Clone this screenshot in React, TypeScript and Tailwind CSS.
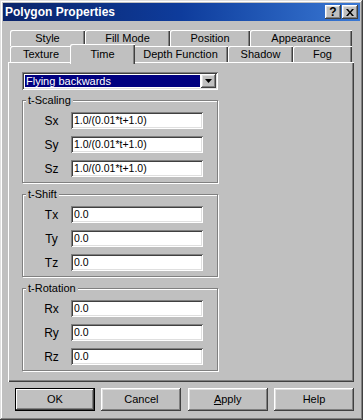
import React from "react";

const raised =
  "shadow-[inset_-1px_-1px_#404040,inset_1px_1px_#ffffff,inset_-2px_-2px_#808080,inset_2px_2px_#dfdfdf]";
const sunken =
  "shadow-[inset_1px_1px_#808080,inset_-1px_-1px_#ffffff,inset_2px_2px_#404040,inset_-2px_-2px_#dfdfdf]";

interface TabProps {
  label: string;
  width: number;
  selected?: boolean;
}

const Tab: React.FC<TabProps> = ({ label, width, selected }) => {
  if (selected) {
    return (
      <div
        className="relative z-10 -mx-[2px] -mt-[2px] h-[20px] bg-[#c0c0c0] flex justify-center pt-[2px] shadow-[inset_1px_1px_#ffffff,inset_-1px_0_#404040,inset_-2px_0_#808080] rounded-tl-[2px]"
        style={{ width: width + 4 }}
      >
        {label}
      </div>
    );
  }
  return (
    <div
      className="h-full flex items-center justify-center shadow-[inset_1px_1px_#ffffff,inset_-1px_0_#404040,inset_-2px_0_#808080] rounded-tl-[2px]"
      style={{ width }}
    >
      {label}
    </div>
  );
};

interface GroupProps {
  title: string;
  rows: { label: string; value: string }[];
  className?: string;
}

const Group: React.FC<GroupProps> = ({ title, rows, className }) => (
  <div
    className={`relative w-[196px] border border-[#808080] shadow-[inset_1px_1px_#ffffff,1px_1px_#ffffff] pt-[11px] pb-[5px] flex flex-col gap-[7px] ${className ?? ""}`}
  >
    <span className="absolute -top-[8px] left-[3px] px-[2px] bg-[#c0c0c0] leading-[14px]">
      {title}
    </span>
    {rows.map((r) => (
      <div key={r.label} className="flex items-center h-[17px]">
        <span className="w-[48px] pl-[9px] text-center text-[12px]">{r.label}</span>
        <div
          className={`w-[132px] h-[17px] bg-white ${sunken} pl-[3px] flex items-center text-[10.5px]`}
        >
          {r.value}
        </div>
      </div>
    ))}
  </div>
);

const Button: React.FC<{ children: React.ReactNode; isDefault?: boolean }> = ({
  children,
  isDefault,
}) => (
  <div
    className={`w-[80px] h-[23px] flex items-center justify-center ${
      isDefault
        ? "shadow-[inset_0_0_0_1px_#000000,inset_-2px_-2px_#404040,inset_2px_2px_#ffffff,inset_-3px_-3px_#808080]"
        : raised
    }`}
  >
    {children}
  </div>
);

export default function App() {
  const scale = "1.0/(0.01*t+1.0)";
  return (
    <div
      className="w-[363px] h-[420px] bg-[#c0c0c0] p-[3px] flex flex-col text-[11px] text-black shadow-[inset_-1px_-1px_#404040,inset_1px_1px_#dfdfdf,inset_-2px_-2px_#808080,inset_2px_2px_#ffffff]"
      style={{ fontFamily: '"Liberation Sans", Arial, sans-serif' }}
    >
      {/* Title bar */}
      <div className="h-[18px] bg-gradient-to-r from-[#0a246a] via-[#0e3c9c] to-[#3a78d4] flex items-center justify-between pl-[2px] pr-[2px]">
        <span className="text-white font-bold text-[12px]">Polygon Properties</span>
        <div className="flex gap-[1px]">
          <div className={`w-[16px] h-[14px] bg-[#c0c0c0] ${raised} flex items-center justify-center font-bold text-[12px] leading-none`}>
            ?
          </div>
          <div className={`w-[16px] h-[14px] bg-[#c0c0c0] ${raised} flex items-center justify-center`}>
            <svg width="8" height="7" viewBox="0 0 8 7">
              <path d="M0 0h2l2 2.5L6 0h2L5 3.5 8 7H6L4 4.5 2 7H0l3-3.5z" fill="#000" />
            </svg>
          </div>
        </div>
      </div>

      {/* Tabs */}
      <div className="mt-[9px] ml-[7px] w-[342px] h-[16px] flex">
        <Tab label="Style" width={75} />
        <Tab label="Fill Mode" width={85} />
        <Tab label="Position" width={80} />
        <Tab label="Appearance" width={102} />
      </div>
      <div className="ml-[7px] w-[342px] h-[16px] flex items-start">
        <Tab label="Texture" width={62} />
        <Tab label="Time" width={61} selected />
        <Tab label="Depth Function" width={95} />
        <Tab label="Shadow" width={65} />
        <Tab label="Fog" width={59} />
      </div>

      {/* Panel */}
      <div className="ml-[5px] w-[346px] h-[320px] shadow-[inset_1px_1px_#ffffff,inset_-1px_-1px_#404040,inset_-2px_-2px_#808080] pl-[14px] pt-[10px] flex flex-col">
        <div className={`w-[196px] h-[18px] bg-white ${sunken} flex items-center pl-[3px] pr-[2px] gap-[1px]`}>
          <div className="flex-1 h-[12px] bg-[#000080] text-white flex items-center pl-[1px]">
            Flying backwards
          </div>
          <div className={`w-[15px] h-[14px] bg-[#c0c0c0] ${raised} flex items-center justify-center`}>
            <svg width="7" height="4" viewBox="0 0 7 4">
              <path d="M0 0h7L3.5 4z" fill="#000" />
            </svg>
          </div>
        </div>

        <Group
          title="t-Scaling"
          className="mt-[10px]"
          rows={[
            { label: "Sx", value: scale },
            { label: "Sy", value: scale },
            { label: "Sz", value: scale },
          ]}
        />
        <Group
          title="t-Shift"
          className="mt-[11px]"
          rows={[
            { label: "Tx", value: "0.0" },
            { label: "Ty", value: "0.0" },
            { label: "Tz", value: "0.0" },
          ]}
        />
        <Group
          title="t-Rotation"
          className="mt-[11px]"
          rows={[
            { label: "Rx", value: "0.0" },
            { label: "Ry", value: "0.0" },
            { label: "Rz", value: "0.0" },
          ]}
        />
      </div>

      {/* Buttons */}
      <div className="mt-[6px] ml-[12px] w-[339px] flex justify-between">
        <Button isDefault>OK</Button>
        <Button>Cancel</Button>
        <Button>
          <span>
            <span className="underline">A</span>pply
          </span>
        </Button>
        <Button>Help</Button>
      </div>
    </div>
  );
}
